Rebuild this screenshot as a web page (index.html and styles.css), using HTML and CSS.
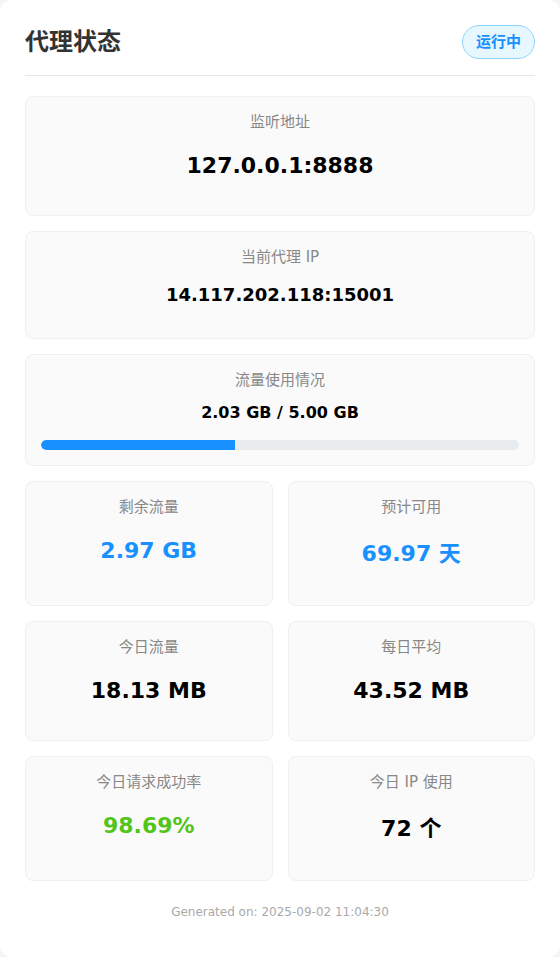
FILE: index.html
```html
<!DOCTYPE html>
<html lang="zh-CN">
<head>
<meta charset="utf-8">
<title>代理状态</title>
<link rel="stylesheet" href="styles.css">
</head>
<body>
<div class="panel">
  <header class="header">
    <h1 class="title">代理状态</h1>
    <span class="badge">运行中</span>
  </header>

  <section class="card">
    <div class="label">监听地址</div>
    <div class="value value-lg">127.0.0.1:8888</div>
  </section>

  <section class="card">
    <div class="label">当前代理 IP</div>
    <div class="value value-md">14.117.202.118:15001</div>
  </section>

  <section class="card">
    <div class="label">流量使用情况</div>
    <div class="value value-sm">2.03 GB / 5.00 GB</div>
    <div class="bar"><div class="bar-fill" style="width: 40.6%"></div></div>
  </section>

  <div class="grid">
    <section class="card">
      <div class="label">剩余流量</div>
      <div class="value value-lg blue">2.97 GB</div>
    </section>
    <section class="card">
      <div class="label">预计可用</div>
      <div class="value value-lg blue">69.97 <span class="unit-cjk">天</span></div>
    </section>
    <section class="card">
      <div class="label">今日流量</div>
      <div class="value value-lg">18.13 MB</div>
    </section>
    <section class="card">
      <div class="label">每日平均</div>
      <div class="value value-lg">43.52 MB</div>
    </section>
    <section class="card">
      <div class="label">今日请求成功率</div>
      <div class="value value-lg green">98.69%</div>
    </section>
    <section class="card">
      <div class="label">今日 IP 使用</div>
      <div class="value value-lg">72 <span class="unit-cjk">个</span></div>
    </section>
  </div>

  <footer class="footer">Generated on: 2025-09-02 11:04:30</footer>
</div>
</body>
</html>
```

FILE: styles.css
```css
* {
  box-sizing: border-box;
}

html, body {
  margin: 0;
  padding: 0;
}

body {
  background: #f5f5f5;
  font-family: "DejaVu Sans", "Noto Sans CJK SC", sans-serif;
  color: #000;
}

.panel {
  background: #ffffff;
  border-radius: 12px;
  padding: 25px;
  min-height: 957px;
  display: flex;
  flex-direction: column;
  gap: 15px;
}

.header {
  display: flex;
  align-items: center;
  justify-content: space-between;
  padding-bottom: 16px;
  border-bottom: 1px solid #e8e8e8;
  margin-bottom: 5px;
}

.title {
  margin: 0;
  font-size: 24px;
  line-height: 34px;
  font-weight: bold;
  color: #333333;
}

.badge {
  display: inline-block;
  padding: 6px 13px;
  font-size: 15px;
  line-height: 20px;
  font-weight: bold;
  color: #1890ff;
  background: #e6f7ff;
  border: 1px solid #91d5ff;
  border-radius: 17px;
}

.card {
  background: #fafafa;
  border: 1px solid #f0f0f0;
  border-radius: 8px;
  padding: 15px;
  text-align: center;
}

.label {
  font-size: 15px;
  line-height: 20px;
  color: #888888;
}

.value {
  font-weight: bold;
  color: #000;
}

.value-lg {
  font-size: 22px;
  line-height: 32px;
  margin: 18px 0;
}

.value-md {
  font-size: 18px;
  line-height: 27px;
  margin: 14px 0 15px;
}

.value-sm {
  font-size: 16px;
  line-height: 24px;
  margin: 11px 0 15px;
}

.unit-cjk {
  line-height: 37px;
}

.blue {
  color: #1890ff;
}

.green {
  color: #52c41a;
}

.bar {
  height: 10px;
  background: #e9ecef;
  border-radius: 5px;
  overflow: hidden;
}

.bar-fill {
  height: 100%;
  background: #1890ff;
  border-radius: 5px 0 0 5px;
}

.grid {
  display: grid;
  grid-template-columns: 1fr 1fr;
  gap: 15px;
}

.footer {
  margin-top: 7px;
  text-align: center;
  font-size: 12px;
  line-height: 18px;
  color: #aaaaaa;
}
```
